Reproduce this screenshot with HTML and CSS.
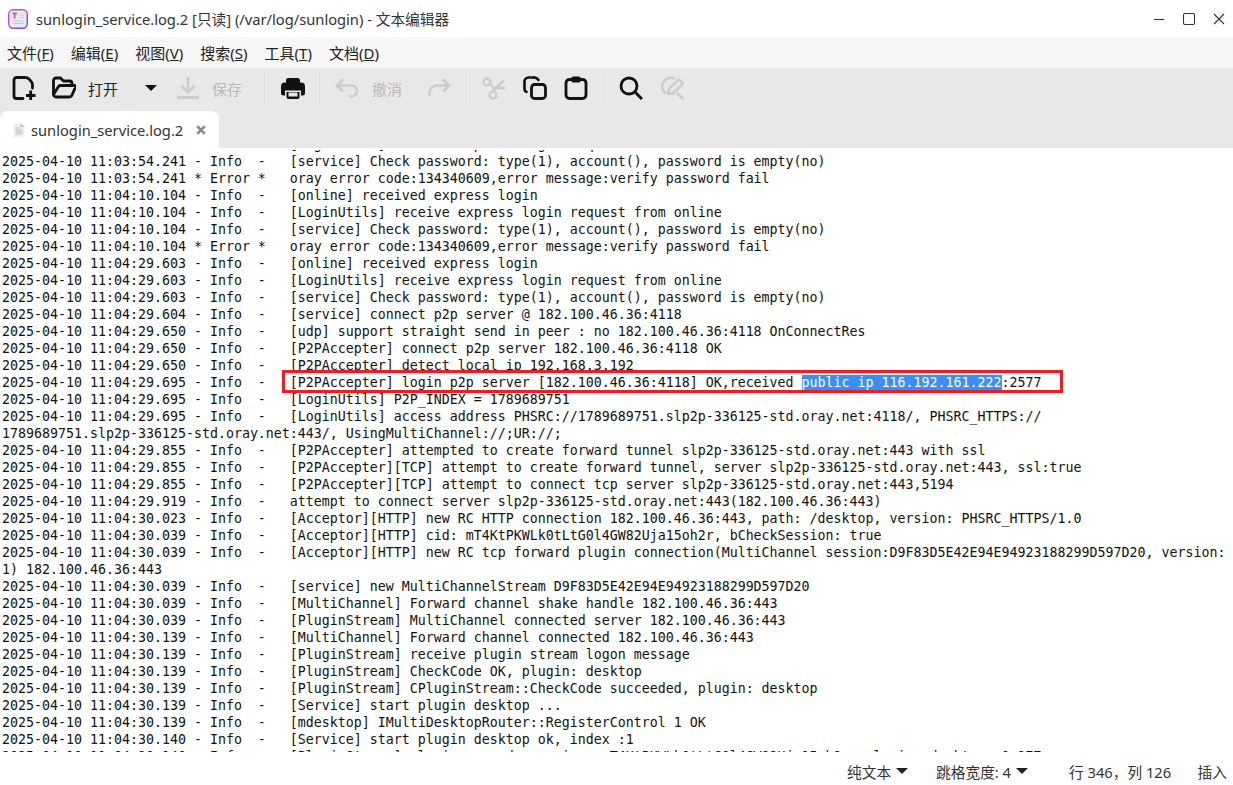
FILE: index.html
```html
<!DOCTYPE html>
<html lang="zh">
<head>
<meta charset="utf-8">
<title>sunlogin_service.log.2</title>
<link rel="stylesheet" href="styles.css">
</head>
<body>
<div class="window">
  <header class="titlebar">
    <svg class="app-icon" viewBox="0 0 20 20"><defs><linearGradient id="g" x1="0" y1="0" x2="1" y2="1"><stop offset="0" stop-color="#e24fc4"/><stop offset="1" stop-color="#6a4fe0"/></linearGradient></defs><rect x="0.7" y="0.7" width="18.6" height="18.6" rx="4.5" fill="#ece8fb" stroke="url(#g)" stroke-width="1.4"/><path d="M4.5 4.5h4.5M6.7 4.5v5" stroke="#e8404a" stroke-width="1.3" fill="none"/><path d="M11 6h5M11 8.5h5M5 12h11M5 14.500h11" stroke="#c8c4e4" stroke-width="1" fill="none"/></svg>
    <span class="title">sunlogin_service.log.2 [只读] (/var/log/sunlogin) - 文本编辑器</span>
    <div class="win-controls">
      <svg width="12" height="12" viewBox="0 0 12 12"><path d="M1 6.500h10" stroke="#333" stroke-width="1.100"/></svg>
      <svg width="14" height="14" viewBox="0 0 14 14"><rect x="1.500" y="1.500" width="11" height="11" rx="1.500" fill="none" stroke="#333" stroke-width="1.100"/></svg>
      <svg width="12" height="12" viewBox="0 0 12 12"><path d="M1 1l10 10M11 1L1 11" stroke="#333" stroke-width="1.100"/></svg>
    </div>
  </header>
  <nav class="menubar">
    <span>文件(<u>F</u>)</span><span>编辑(<u>E</u>)</span><span>视图(<u>V</u>)</span><span>搜索(<u>S</u>)</span><span>工具(<u>T</u>)</span><span>文档(<u>D</u>)</span>
  </nav>
  <div class="toolbar">
    <svg class="ti new" viewBox="0 0 24 24"><path d="M11 22.500H4.500a2.500 2.500 0 0 1-2.500-2.500V4a2.500 2.500 0 0 1 2.500-2.500h8.500c2 0 3 .5 4.300 1.800 1.300 1.300 3.200 3 3.200 5.700v3" fill="none" stroke="#111" stroke-width="2.800" stroke-linecap="round"/><path d="M14 19.500h9.500M18.700 14.500v9.500" stroke="#111" stroke-width="2.800" fill="none"/></svg>
    <svg class="ti open" viewBox="0 0 24 24"><path d="M1.500 18.500V4.500a2.500 2.500 0 0 1 2.500-2.500h4.500l3 3h6a2.500 2.500 0 0 1 2.500 2.500V9" fill="none" stroke="#111" stroke-width="2.800" stroke-linejoin="round"/><path d="M1.500 18.500a2.500 2.500 0 0 0 2.500 2.500h13.500a2.500 2.500 0 0 0 2.200-1.300l2.800-6.500a2 2 0 0 0-1.900-3.700H8.500a2.500 2.500 0 0 0-2.300 1.500z" fill="none" stroke="#111" stroke-width="2.800" stroke-linejoin="round"/></svg>
    <span class="tlabel open-label">打开</span>
    <span class="caret big"></span>
    <svg class="ti save" viewBox="0 0 24 24"><path d="M12 1v15M5.500 10l6.500 6.500 6.500-6.500" fill="none" stroke="#ccc" stroke-width="2.600"/><path d="M1 21.500h22" stroke="#ccc" stroke-width="3"/></svg>
    <span class="tlabel dim save-label">保存</span>
    <i class="sep s1"></i>
    <svg class="ti print" viewBox="0 0 24 24"><path d="M5 7V4.500A2.500 2.500 0 0 1 7.500 2h9A2.500 2.500 0 0 1 19 4.500V7z" fill="#111"/><path d="M4 6.500h16a4 4 0 0 1 4 4V17a2.500 2.500 0 0 1-2.500 2.500H20v-5H4v5H2.500A2.500 2.500 0 0 1 0 17v-6.500a4 4 0 0 1 4-4z" fill="#111"/><path d="M5.500 16h13v5a2 2 0 0 1-2 2h-9a2 2 0 0 1-2-2z" fill="#111"/><rect x="7.500" y="16.500" width="9" height="4" fill="#e8e8e8"/></svg>
    <i class="sep s2"></i>
    <svg class="ti undo" viewBox="0 0 24 24"><path d="M8 3.500L2 9.500l6 6" fill="none" stroke="#ccc" stroke-width="2.600"/><path d="M2 9.500h14.500a5.500 5.500 0 0 1 5.500 5.500v0a5.500 5.500 0 0 1-5.500 5.500H14" fill="none" stroke="#ccc" stroke-width="2.600"/></svg>
    <span class="tlabel dim undo-label">撤消</span>
    <svg class="ti redo" viewBox="0 0 24 24"><path d="M16 3.500l6 6-6 6" fill="none" stroke="#ccc" stroke-width="2.600"/><path d="M22 9.500H10A7.500 7.500 0 0 0 2.500 17v3" fill="none" stroke="#ccc" stroke-width="2.600"/></svg>
    <i class="sep s3"></i>
    <svg class="ti cut" viewBox="0 0 24 24"><circle cx="5" cy="6" r="3.500" fill="none" stroke="#ccc" stroke-width="2.400"/><circle cx="11" cy="19" r="3.500" fill="none" stroke="#ccc" stroke-width="2.400"/><path d="M8 8l3 3M12 15.500v-2l10-9M10 12h13" fill="none" stroke="#ccc" stroke-width="2.400"/></svg>
    <svg class="ti copy" viewBox="0 0 24 24"><path d="M11 1.500H5.500a4 4 0 0 0-4 4V13a3 3 0 0 0 2 2.800" fill="none" stroke="#111" stroke-width="2.600" stroke-linecap="round"/><path d="M11 1.500c2 0 3.500 1 4.500 2.500" fill="none" stroke="#111" stroke-width="2.600" stroke-linecap="round"/><rect x="8.500" y="8.500" width="14" height="14" rx="3" fill="none" stroke="#111" stroke-width="2.800"/></svg>
    <svg class="ti paste" viewBox="0 0 24 24"><rect x="2" y="3.500" width="20" height="19" rx="3.500" fill="none" stroke="#111" stroke-width="2.800"/><rect x="7.500" y="0.500" width="9" height="6" rx="1.500" fill="#111"/></svg>
    <i class="sep s4"></i>
    <svg class="ti find" viewBox="0 0 24 24"><circle cx="10" cy="10" r="8" fill="none" stroke="#111" stroke-width="2.800"/><path d="M16 16l7 7" stroke="#111" stroke-width="3" fill="none"/></svg>
    <svg class="ti replace" viewBox="0 0 24 24"><path d="M15 2.800A9 9 0 0 0 2 10a9 9 0 0 0 4 7.500" fill="none" stroke="#ccc" stroke-width="2.500"/><path d="M8 18l1-5L19 3.500l4 4-10 10z" fill="none" stroke="#ccc" stroke-width="2.500" stroke-linejoin="round"/><path d="M17 17l6 6" stroke="#ccc" stroke-width="2.500" fill="none"/></svg>
  </div>
  <div class="tabbar">
    <div class="tab">
      <svg class="doc" viewBox="0 0 12 16"><path d="M0.500 1h7l4 4v10.500h-11z" fill="#f1f1f1"/><path d="M7.500 1l4 4h-4z" fill="#bbb"/><path d="M2.500 6h5M2.500 8h7M2.500 10h7M2.500 12h7" stroke="#bbb" stroke-width="1"/></svg>
      <span class="tab-name">sunlogin_service.log.2</span>
      <svg class="tab-close" viewBox="0 0 12 12"><path d="M1.500 1.500l9 9M10.500 1.500l-9 9" stroke="#8a8a8a" stroke-width="3"/></svg>
    </div>
  </div>
  <main class="editor">
    <div class="log">
<div class="ln">2025-04-10 11:03:54.241 - Info  -   [LoginUtils] receive express login request from online</div>
<div class="ln">2025-04-10 11:03:54.241 - Info  -   [service] Check password: type(1), account(), password is empty(no)</div>
<div class="ln">2025-04-10 11:03:54.241 * Error *   oray error code:134340609,error message:verify password fail</div>
<div class="ln">2025-04-10 11:04:10.104 - Info  -   [online] received express login</div>
<div class="ln">2025-04-10 11:04:10.104 - Info  -   [LoginUtils] receive express login request from online</div>
<div class="ln">2025-04-10 11:04:10.104 - Info  -   [service] Check password: type(1), account(), password is empty(no)</div>
<div class="ln">2025-04-10 11:04:10.104 * Error *   oray error code:134340609,error message:verify password fail</div>
<div class="ln">2025-04-10 11:04:29.603 - Info  -   [online] received express login</div>
<div class="ln">2025-04-10 11:04:29.603 - Info  -   [LoginUtils] receive express login request from online</div>
<div class="ln">2025-04-10 11:04:29.603 - Info  -   [service] Check password: type(1), account(), password is empty(no)</div>
<div class="ln">2025-04-10 11:04:29.604 - Info  -   [service] connect p2p server @ 182.100.46.36:4118</div>
<div class="ln">2025-04-10 11:04:29.650 - Info  -   [udp] support straight send in peer : no 182.100.46.36:4118 OnConnectRes</div>
<div class="ln">2025-04-10 11:04:29.650 - Info  -   [P2PAccepter] connect p2p server 182.100.46.36:4118 OK</div>
<div class="ln">2025-04-10 11:04:29.650 - Info  -   [P2PAccepter] detect local ip 192.168.3.192</div>
<div class="ln marked">2025-04-10 11:04:29.695 - Info  -   [P2PAccepter] login p2p server [182.100.46.36:4118] OK,received <span class="sel">public ip 116.192.161.222</span>:2577<i class="redbox"></i></div>
<div class="ln">2025-04-10 11:04:29.695 - Info  -   [LoginUtils] P2P_INDEX = 1789689751</div>
<div class="ln">2025-04-10 11:04:29.695 - Info  -   [LoginUtils] access address PHSRC://1789689751.slp2p-336125-std.oray.net:4118/, PHSRC_HTTPS://<br>1789689751.slp2p-336125-std.oray.net:443/, UsingMultiChannel://;UR://;</div>
<div class="ln">2025-04-10 11:04:29.855 - Info  -   [P2PAccepter] attempted to create forward tunnel slp2p-336125-std.oray.net:443 with ssl</div>
<div class="ln">2025-04-10 11:04:29.855 - Info  -   [P2PAccepter][TCP] attempt to create forward tunnel, server slp2p-336125-std.oray.net:443, ssl:true</div>
<div class="ln">2025-04-10 11:04:29.855 - Info  -   [P2PAccepter][TCP] attempt to connect tcp server slp2p-336125-std.oray.net:443,5194</div>
<div class="ln">2025-04-10 11:04:29.919 - Info  -   attempt to connect server slp2p-336125-std.oray.net:443(182.100.46.36:443)</div>
<div class="ln">2025-04-10 11:04:30.023 - Info  -   [Acceptor][HTTP] new RC HTTP connection 182.100.46.36:443, path: /desktop, version: PHSRC_HTTPS/1.0</div>
<div class="ln">2025-04-10 11:04:30.039 - Info  -   [Acceptor][HTTP] cid: mT4KtPKWLk0tLtG0l4GW82Uja15oh2r, bCheckSession: true</div>
<div class="ln">2025-04-10 11:04:30.039 - Info  -   [Acceptor][HTTP] new RC tcp forward plugin connection(MultiChannel session:D9F83D5E42E94E94923188299D597D20, version:<br>1) 182.100.46.36:443</div>
<div class="ln">2025-04-10 11:04:30.039 - Info  -   [service] new MultiChannelStream D9F83D5E42E94E94923188299D597D20</div>
<div class="ln">2025-04-10 11:04:30.039 - Info  -   [MultiChannel] Forward channel shake handle 182.100.46.36:443</div>
<div class="ln">2025-04-10 11:04:30.039 - Info  -   [PluginStream] MultiChannel connected server 182.100.46.36:443</div>
<div class="ln">2025-04-10 11:04:30.139 - Info  -   [MultiChannel] Forward channel connected 182.100.46.36:443</div>
<div class="ln">2025-04-10 11:04:30.139 - Info  -   [PluginStream] receive plugin stream logon message</div>
<div class="ln">2025-04-10 11:04:30.139 - Info  -   [PluginStream] CheckCode OK, plugin: desktop</div>
<div class="ln">2025-04-10 11:04:30.139 - Info  -   [PluginStream] CPluginStream::CheckCode succeeded, plugin: desktop</div>
<div class="ln">2025-04-10 11:04:30.139 - Info  -   [Service] start plugin desktop ...</div>
<div class="ln">2025-04-10 11:04:30.139 - Info  -   [mdesktop] IMultiDesktopRouter::RegisterControl 1 OK</div>
<div class="ln">2025-04-10 11:04:30.140 - Info  -   [Service] start plugin desktop ok, index :1</div>
<div class="ln">2025-04-10 11:04:30.140 - Info  -   [PluginStream] plugin opened, session: mT4KtPKWLk0tLtG0l4GW82Uja15oh2r, plugin: desktop, 0.277</div>
    </div>
  </main>
  <footer class="statusbar">
    <span class="st st-lang">纯文本<i class="caret"></i></span>
    <span class="st st-tab">跳格宽度: 4<i class="caret"></i></span>
    <span class="st st-pos">行 346，列 126</span>
    <span class="st st-ins">插入</span>
  </footer>
</div>
</body>
</html>
```

FILE: styles.css
```css
* { box-sizing: border-box; }
html, body { margin: 0; height: 100%; overflow: hidden; background: #fff; }
body { font-family: "Noto Sans", "Noto Sans CJK SC", sans-serif; color: #222; }
.window { width: 1233px; height: 785px; display: flex; flex-direction: column; }

.titlebar { height: 37px; flex: none; display: flex; align-items: center; padding-left: 8px; background: #fff; }
.app-icon { width: 20px; height: 20px; flex: none; }
.title { margin-left: 8px; font-size: 14.7px; color: #333; white-space: pre; }
.win-controls { margin-left: auto; display: flex; align-items: center; gap: 17px; padding-right: 8px; }

.menubar { height: 31px; flex: none; display: flex; align-items: center; gap: 17px; padding-left: 7px; background: #f6f6f6; font-size: 15px; color: #222; }
.menubar span { white-space: pre; }

.toolbar { height: 43px; flex: none; display: flex; align-items: center; padding: 0 0 3px 12px; background: #e8e8e8; }
.ti { width: 24px; height: 24px; flex: none; }
.tlabel { font-size: 15px; color: #222; flex: none; }
.tlabel.dim { color: #b9b9b9; }
.sep { width: 1px; height: 31px; background: #e2e2e2; flex: none; }
.open { margin-left: 16px; }
.open-label { margin-left: 12px; }
.caret { display: inline-block; width: 0; height: 0; border-left: 6px solid transparent; border-right: 6px solid transparent; border-top: 6px solid #111; flex: none; }
.caret.big { margin-left: 27px; }
.save { margin-left: 19px; }
.save-label { margin-left: 12px; }
.s1 { margin-left: 22px; }
.print { margin-left: 16px; }
.s2 { margin-left: 14px; }
.undo { margin-left: 15px; }
.undo-label { margin-left: 13px; }
.redo { margin-left: 25px; }
.s3 { margin-left: 15px; }
.cut { margin-left: 15px; }
.copy { margin-left: 17px; }
.paste { margin-left: 17px; }
.s4 { margin-left: 15px; }
.find { margin-left: 15px; }
.replace { margin-left: 17px; }

.tabbar { height: 37px; flex: none; background: #e8e8e8; display: flex; align-items: flex-end; }
.tab { width: 219px; height: 37px; background: #fff; border-radius: 8px 8px 0 0; display: flex; align-items: center; padding-left: 13px; }
.doc { width: 12px; height: 16px; flex: none; }
.tab-name { margin-left: 6px; font-size: 14.7px; color: #333; }
.tab-close { width: 10px; height: 10px; margin-left: 13px; flex: none; }

.editor { height: 602px; margin-top: 2px; flex: none; overflow: hidden; background: #fff; }
.log { margin-top: -14px; padding-left: 2px; font-family: "DejaVu Sans Mono", monospace; font-size: 13.29px; line-height: 17px; color: #111; }
.ln { white-space: pre; }
.marked { position: relative; }
.sel { background: #3d8ef2; color: #fff; }
.redbox { position: absolute; left: 280px; top: -4px; width: 781px; height: 23px; border: 3px solid #ee1c25; }

.statusbar { height: 33px; flex: none; display: flex; align-items: center; padding-top: 5px; background: #fff; font-size: 14.7px; color: #333; }
.st { white-space: pre; display: inline-flex; align-items: center; }
.st .caret { border-top-color: #222; margin-left: 5px; }
.st-lang { margin-left: 847px; }
.st-tab { margin-left: 28px; }
.st-pos { margin-left: 41px; }
.st-ins { margin-left: auto; margin-right: 6px; }
```
